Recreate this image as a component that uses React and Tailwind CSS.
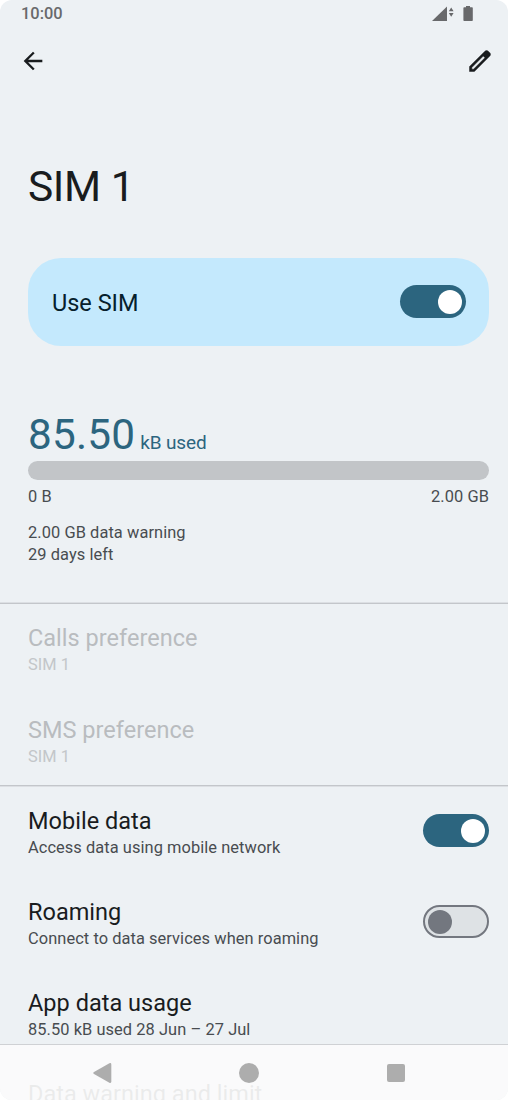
import clsx from "clsx";

const preferences = [
  { title: "Calls preference", summary: "SIM 1", disabled: true },
  { title: "SMS preference", summary: "SIM 1", disabled: true },
];

const settings = [
  { title: "Mobile data", summary: "Access data using mobile network", checked: true },
  { title: "Roaming", summary: "Connect to data services when roaming", checked: false },
  { title: "App data usage", summary: "85.50 kB used 28 Jun – 27 Jul" },
  { title: "Data warning and limit" },
];

function Switch({ checked }) {
  return (
    <span
      role="switch"
      aria-checked={checked}
      className={clsx(
        "flex h-[33px] w-[66px] shrink-0 items-center rounded-full",
        checked ? "justify-end bg-[#2c657f] pr-[4.5px]" : "border-2 border-[#73777f] bg-[#dee2e5] pl-[2.5px]"
      )}
    >
      <span className={clsx("size-6 rounded-full", checked ? "bg-white" : "bg-[#73777f]")} />
    </span>
  );
}

function Row({ title, summary, checked, disabled }) {
  return (
    <div className="flex h-[91.2px] items-center justify-between pr-[19px] pl-7">
      <div className="pt-[5px] whitespace-nowrap">
        <h2 className={clsx("text-[23.5px] leading-[29px] tracking-[0.02px]", disabled ? "text-[#b9bcbf]" : "text-[#191c1e]")}>
          {title}
        </h2>
        <p className={clsx("h-6 text-[16.4px] leading-6 tracking-[0.07px]", disabled ? "text-[#c3c6c9]" : "text-[#484c50]")}>
          {summary}
        </p>
      </div>
      {checked !== undefined && <Switch checked={checked} />}
    </div>
  );
}

function StatusBar() {
  return (
    <div className="flex h-7 items-center justify-between pr-[35px] pl-[21px] text-[#68696b]">
      <span className="text-[16.4px] font-medium leading-7">10:00</span>
      <svg width="41" height="16" viewBox="0 0 41 16" fill="currentColor">
        <path d="M0 15 15 .5V15Z" />
        <path d="m19.2 1.4 2.4 3.8h-4.8ZM19.2 10.8l2.4-3.8h-4.8Z" />
        <path d="M34 0h4v1.2h2q.8 0 .8.8v12.2q0 .8-.8.8h-7.8q-.8 0-.8-.8V2q0-.8.8-.8H34Z" />
      </svg>
    </div>
  );
}

function Toolbar() {
  return (
    <div className="flex h-[66px] items-center justify-between pr-[14px] pl-[19px] text-[#191c1e]">
      <svg width="28" height="28" viewBox="0 0 24 24" fill="currentColor">
        <path d="M20 11H7.83l5.59-5.59L12 4l-8 8 8 8 1.41-1.41L7.83 13H20v-2z" />
      </svg>
      <svg width="28" height="28" viewBox="0 0 24 24" fill="currentColor" stroke="currentColor" strokeWidth="0.4">
        <path d="M20.41 4.94l-1.35-1.35c-.78-.78-2.05-.78-2.83 0L3 16.82V21h4.18L20.41 7.77c.79-.78.79-2.05 0-2.83zM6.41 19.06L5 19v-1.36l9.82-9.82 1.41 1.41-9.82 9.83z" />
      </svg>
    </div>
  );
}

function DataUsage() {
  return (
    <section className="mt-[67px] h-[189px] pr-[19px] pl-7 text-[16.4px] text-[#484c50]">
      <div className="flex h-12 items-baseline gap-[5px] text-[#2c657f]">
        <span className="text-[42.3px] leading-[44px] tracking-[0.2px]">85.50</span>
        <span className="text-[19px] tracking-[-0.15px]">kB used</span>
      </div>
      <div className="h-[19px] rounded-full bg-[#c2c5c8]" />
      <div className="mt-[6px] flex justify-between leading-[22px] tracking-[0.08px]">
        <span>0 B</span>
        <span>2.00 GB</span>
      </div>
      <p className="mt-[14px] leading-[22px] tracking-[0.08px]">2.00 GB data warning</p>
      <p className="leading-[22px] tracking-[0.08px]">29 days left</p>
    </section>
  );
}

function NavigationBar() {
  return (
    <nav className="absolute inset-x-0 bottom-0 flex h-14 items-center border-t border-[#cfd1d4] bg-[#fbfbfb]/93 text-[#adadad]">
      <svg className="ml-[93px]" width="19" height="20" viewBox="0 0 19 20" fill="currentColor">
        <path d="M1 9 16.4.3q1.9-.7 1.9 1.2v17q0 1.9-1.9 1.2L1 11q-1.5-1 0-2Z" />
      </svg>
      <span className="ml-[127px] size-5 rounded-full bg-current" />
      <span className="ml-32 size-[18px] rounded-xs bg-current" />
    </nav>
  );
}

export default function App() {
  return (
    <div className="h-[1100px] w-[508px] bg-white">
      <main className="relative h-full overflow-hidden rounded-[12px] bg-[#edf1f4] font-[Roboto,sans-serif]">
        <StatusBar />
        <Toolbar />
        <h1 className="mt-[67px] ml-7 text-[42.5px] leading-[52px] tracking-[-0.4px] text-[#191c1e]">SIM 1</h1>
        <div className="mt-[44.6px] mr-[19px] ml-7 flex h-[88px] items-center justify-between rounded-[33px] bg-[#c4e9fd] pr-[23px] pl-6">
          <span className="pt-[3px] text-[23.5px] leading-7 text-[#06202c]">Use SIM</span>
          <Switch checked />
        </div>
        <DataUsage />
        <hr className="mt-[1.4px] h-px border-0 bg-[#c3c6ca] shadow-[0_-1px_0_#dcdfe3]" />
        <div className="-mt-[1.2px]">
          {preferences.map((item) => (
            <Row key={item.title} {...item} />
          ))}
        </div>
        <hr className="-mt-[0.2px] h-px border-0 bg-[#c3c6ca] shadow-[0_1px_0_#dcdfe3]" />
        <div className="-mt-[0.8px]">
          {settings.map((item) => (
            <Row key={item.title} {...item} />
          ))}
        </div>
        <NavigationBar />
      </main>
    </div>
  );
}
